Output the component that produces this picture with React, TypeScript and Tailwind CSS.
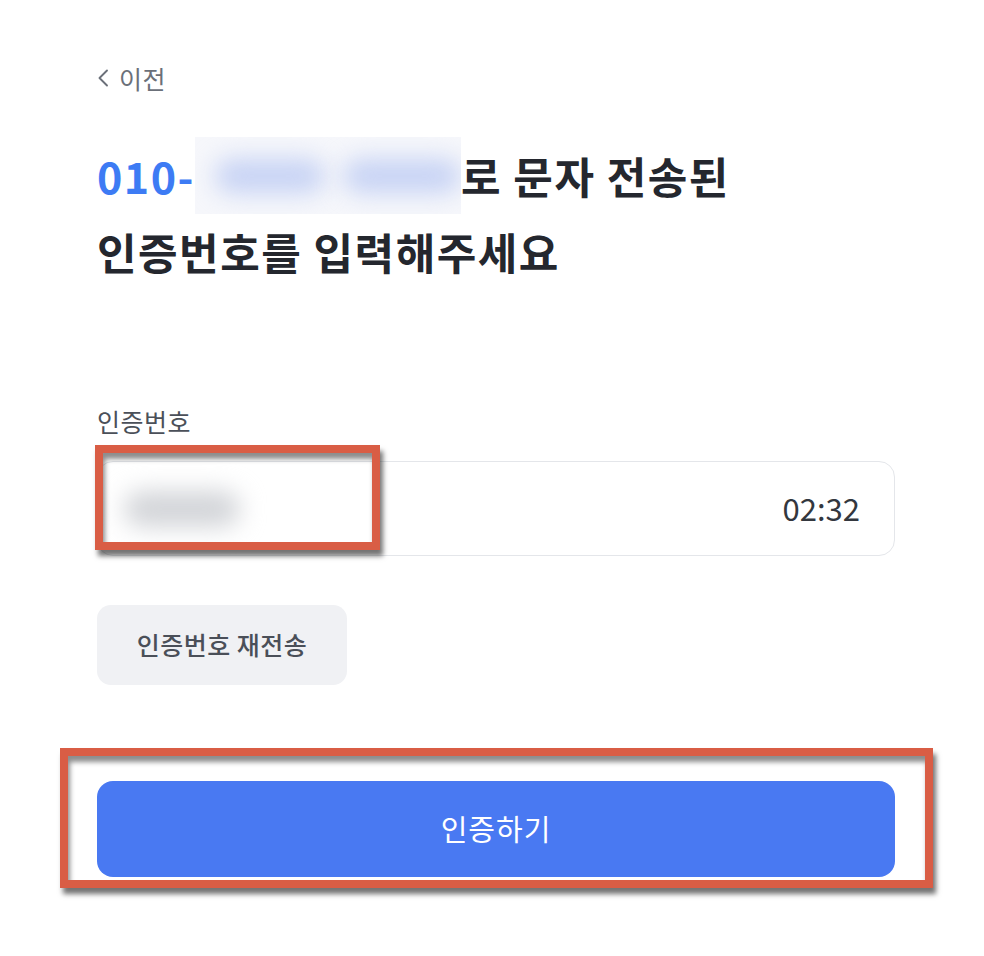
import React from 'react';

const font = { fontFamily: '"Noto Sans CJK KR", "Noto Sans", sans-serif' };

function Annotation({ className }: { className: string }) {
  return (
    <div
      className={`pointer-events-none absolute border-[8px] border-[#d95d45] shadow-[3px_6px_5px_rgba(0,0,0,0.55),inset_2px_6px_5px_rgba(0,0,0,0.45)] ${className}`}
    />
  );
}

export default function App() {
  return (
    <div className="relative min-h-[956px] w-[984px] bg-white" style={font}>
      <div className="flex w-[895px] flex-col pl-[97px] pt-[63px]">
        <button className="flex h-[30px] items-center gap-[10px] text-[25px] tracking-[0.5px] text-[#6b7079]">
          <svg width="12" height="20" viewBox="0 0 12 20" fill="none">
            <path d="M10 2.5 L2.5 10 L10 17.5" stroke="#6b7079" strokeWidth="1.9" strokeLinecap="round" strokeLinejoin="round" />
          </svg>
          <span className="leading-none">이전</span>
        </button>

        <h1 className="mt-[44px] text-[43px] font-bold leading-[75px] tracking-[1.5px] text-[#24272e]">
          <span className="flex items-center">
            <span className="text-[#3d7bf4]">010-</span>
            <span className="relative inline-block h-[77px] w-[266px] overflow-hidden bg-[#f6f7fb]">
              <span className="absolute left-[20px] top-[22px] h-[34px] w-[110px] rounded-full bg-[#c6d2f4] blur-md" />
              <span className="absolute left-[148px] top-[22px] h-[34px] w-[118px] rounded-full bg-[#c6d2f4] blur-md" />
            </span>
            <span>로 문자 전송된</span>
          </span>
          <span className="block">인증번호를 입력해주세요</span>
        </h1>

        <label className="mt-[117px] h-[30px] text-[25px] leading-[30px] tracking-[0.5px] text-[#4b5059]">인증번호</label>

        <div className="mt-[25px] flex h-[95px] w-[798px] items-center justify-between rounded-[16px] border border-[#e4e6ea] pl-[26px] pr-[34px]">
          <span className="h-[36px] w-[116px] rounded-full bg-[#d2d4d8] blur-md" />
          <span className="text-[31px] text-[#33373e]">02:32</span>
        </div>

        <button className="mt-[49px] flex h-[80px] w-[250px] items-center justify-center rounded-[14px] bg-[#f0f1f4] text-[25px] font-medium tracking-[0.5px] text-[#4a4f58]">
          인증번호 재전송
        </button>

        <button className="mt-[96px] flex h-[96px] w-[798px] items-center justify-center rounded-[16px] bg-[#4979f2] text-[29px] tracking-[1px] text-white">
          인증하기
        </button>
      </div>

      <Annotation className="left-[95px] top-[445px] h-[105px] w-[285px]" />
      <Annotation className="left-[60px] top-[748px] h-[140px] w-[873px]" />
    </div>
  );
}
